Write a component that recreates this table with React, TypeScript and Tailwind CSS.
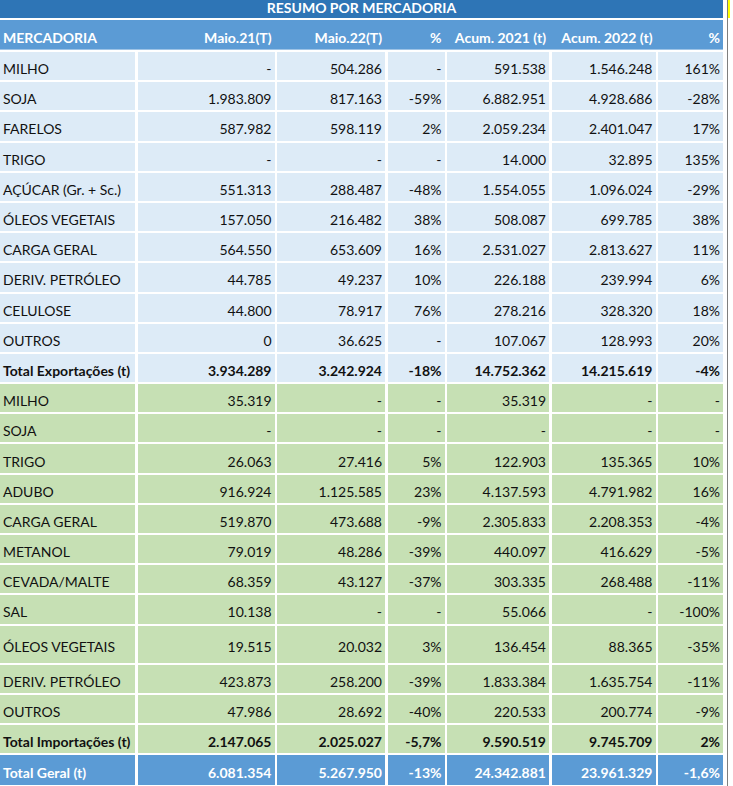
import React from 'react';

type Row = [string, string, string, string, string, string, string];

const exportRows: Row[] = [
  ['MILHO', '-', '504.286', '-', '591.538', '1.546.248', '161%'],
  ['SOJA', '1.983.809', '817.163', '-59%', '6.882.951', '4.928.686', '-28%'],
  ['FARELOS', '587.982', '598.119', '2%', '2.059.234', '2.401.047', '17%'],
  ['TRIGO', '-', '-', '-', '14.000', '32.895', '135%'],
  ['AÇÚCAR (Gr. + Sc.)', '551.313', '288.487', '-48%', '1.554.055', '1.096.024', '-29%'],
  ['ÓLEOS VEGETAIS', '157.050', '216.482', '38%', '508.087', '699.785', '38%'],
  ['CARGA GERAL', '564.550', '653.609', '16%', '2.531.027', '2.813.627', '11%'],
  ['DERIV. PETRÓLEO', '44.785', '49.237', '10%', '226.188', '239.994', '6%'],
  ['CELULOSE', '44.800', '78.917', '76%', '278.216', '328.320', '18%'],
  ['OUTROS', '0', '36.625', '-', '107.067', '128.993', '20%'],
];

const importRows: Row[] = [
  ['MILHO', '35.319', '-', '-', '35.319', '-', '-'],
  ['SOJA', '-', '-', '-', '-', '-', '-'],
  ['TRIGO', '26.063', '27.416', '5%', '122.903', '135.365', '10%'],
  ['ADUBO', '916.924', '1.125.585', '23%', '4.137.593', '4.791.982', '16%'],
  ['CARGA GERAL', '519.870', '473.688', '-9%', '2.305.833', '2.208.353', '-4%'],
  ['METANOL', '79.019', '48.286', '-39%', '440.097', '416.629', '-5%'],
  ['CEVADA/MALTE', '68.359', '43.127', '-37%', '303.335', '268.488', '-11%'],
  ['SAL', '10.138', '-', '-', '55.066', '-', '-100%'],
];

const importRowsTail: Row[] = [
  ['DERIV. PETRÓLEO', '423.873', '258.200', '-39%', '1.833.384', '1.635.754', '-11%'],
  ['OUTROS', '47.986', '28.692', '-40%', '220.533', '200.774', '-9%'],
];

const grid =
  'grid grid-cols-[135px_137px_108px_57px_102px_104px_65px] gap-x-[2.5px]';

const DataRow: React.FC<{ row: Row; cell: string; h: string; bold?: boolean }> = ({
  row,
  cell,
  h,
  bold,
}) => (
  <div className={`${grid} ${h} ${bold ? 'font-bold' : ''}`}>
    {row.map((v, i) => (
      <div
        key={i}
        className={`${cell} flex items-center pt-[5px] whitespace-nowrap ${
          i === 0 ? 'pl-[3px]' : 'justify-end pr-[3px]'
        }`}
      >
        {v}
      </div>
    ))}
  </div>
);

export default function App() {
  const blue = 'bg-[#ddebf7] text-[#111]';
  const green = 'bg-[#c6e0b4] text-[#111]';
  return (
    <div className="w-[733px] h-[786px] overflow-hidden bg-white flex font-['Lato',sans-serif] text-[14px]">
      <div className="w-[723px] flex flex-col">
        <div className="h-[18px] bg-[#2e75b6] text-white font-bold flex items-end justify-center leading-none pb-[3px]">
          RESUMO POR MERCADORIA
        </div>
        <div className={`${grid} mt-[2px] h-[30px] bg-[#5b9bd5] text-white font-bold border-b border-[#9dc3e6]`}>
          {['MERCADORIA', 'Maio.21(T)', 'Maio.22(T)', '%', 'Acum. 2021 (t)', 'Acum. 2022 (t)', '%'].map(
            (v, i) => (
              <div
                key={i}
                className={`flex items-center pt-[5px] whitespace-nowrap ${
                  i === 0 ? 'pl-[3px]' : 'justify-end pr-[3px]'
                }`}
              >
                {v}
              </div>
            )
          )}
        </div>
        <div className="mt-[2px] flex flex-col gap-y-[2px]">
          {exportRows.map((r, i) => (
            <DataRow key={'e' + i} row={r} cell={blue} h="h-[28.2px]" />
          ))}
          <DataRow
            row={['Total Exportações (t)', '3.934.289', '3.242.924', '-18%', '14.752.362', '14.215.619', '-4%']}
            cell={blue}
            h="h-[28.2px]"
            bold
          />
          {importRows.map((r, i) => (
            <DataRow key={'i' + i} row={r} cell={green} h="h-[28.2px]" />
          ))}
          <DataRow
            row={['ÓLEOS VEGETAIS', '19.515', '20.032', '3%', '136.454', '88.365', '-35%']}
            cell={green}
            h="h-[37px]"
          />
          {importRowsTail.map((r, i) => (
            <DataRow key={'t' + i} row={r} cell={green} h="h-[28px]" />
          ))}
          <DataRow
            row={['Total Importações (t)', '2.147.065', '2.025.027', '-5,7%', '9.590.519', '9.745.709', '2%']}
            cell={green}
            h="h-[28px]"
            bold
          />
          <DataRow
            row={['Total Geral (t)', '6.081.354', '5.267.950', '-13%', '24.342.881', '23.961.329', '-1,6%']}
            cell="bg-[#5b9bd5] text-white"
            h="h-[30px]"
            bold
          />
        </div>
      </div>
      <div className="w-[4px]" />
      <div className="w-[1px] bg-[#7f7f7f]" />
      <div className="w-[2px] h-[18px] bg-[#ffff00]" />
    </div>
  );
}
